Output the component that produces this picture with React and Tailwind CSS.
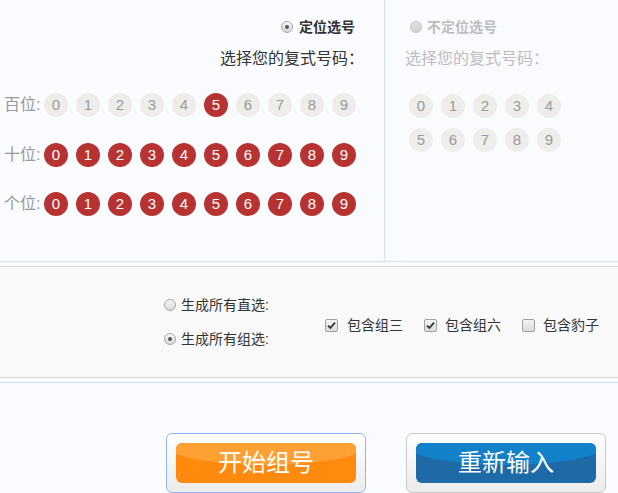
import React from 'react'

const font = { fontFamily: '"Liberation Sans", "Noto Sans CJK SC", sans-serif' }
const digits = [0, 1, 2, 3, 4, 5, 6, 7, 8, 9]

const Ball = ({ n, on }) => (
  <span
    className={
      'flex items-center justify-center w-[24px] h-[24px] rounded-full text-[15px] ' +
      (on ? 'bg-[#b73331] text-white' : 'bg-[#efedea] text-[#9a9a9a]')
    }
  >
    {n}
  </span>
)

const Radio = ({ checked, disabled }) => (
  <span
    className={
      'flex items-center justify-center w-[12px] h-[12px] rounded-full border ' +
      (disabled
        ? 'border-[#c4c4c4] bg-gradient-to-b from-[#e4e4e4] to-[#cfcfcf]'
        : 'border-[#a8a8a8] bg-gradient-to-b from-[#f6f6f6] to-[#d9d9d9]')
    }
  >
    {checked && <span className="w-[4px] h-[4px] rounded-full bg-[#555]" />}
  </span>
)

const Check = ({ checked }) => (
  <span className="flex items-center justify-center w-[13px] h-[13px] rounded-[2px] border border-[#a0a0a0] bg-gradient-to-b from-[#f4f4f4] to-[#dcdcdc]">
    {checked && (
      <svg width="9" height="9" viewBox="0 0 9 9">
        <path d="M1 4.6 L3.4 7 L8 1.6" fill="none" stroke="#333" strokeWidth="1.8" />
      </svg>
    )}
  </span>
)

const Row = ({ label, active }) => (
  <div className="flex items-center h-[24px] pl-[4px]">
    <span className="text-[16px] text-[#999] w-[40px]">{label}</span>
    <div className="flex gap-[8px]">
      {digits.map((d) => (
        <Ball key={d} n={d} on={active === 'all' || active === d} />
      ))}
    </div>
  </div>
)

const App = () => {
  return (
    <div style={font} className="w-[618px] h-[493px] overflow-hidden bg-[#fafbff] text-[#333]">
      <div className="flex h-[262px] border-b border-[#d0e2f6]">
        <div className="w-[385px] border-r border-[#d0e2f6] pt-[17px]">
          <div className="flex items-center justify-end gap-[6px] h-[20px] pr-[29px]">
            <Radio checked />
            <span className="text-[14px] font-bold">定位选号</span>
          </div>
          <div className="h-[24px] mt-[10px] pr-[20px] text-right text-[16px] leading-[24px]">
            选择您的复式号码：
          </div>
          <div className="mt-[22px]">
            <Row label="百位:" active={5} />
          </div>
          <div className="mt-[26px]">
            <Row label="十位:" active="all" />
          </div>
          <div className="mt-[25px]">
            <Row label="个位:" active="all" />
          </div>
        </div>
        <div className="flex-1 pt-[17px]">
          <div className="flex items-center gap-[5px] h-[20px] pl-[25px]">
            <Radio disabled />
            <span className="text-[14px] font-bold text-[#bdbdbd]">不定位选号</span>
          </div>
          <div className="h-[24px] mt-[10px] pl-[20px] text-[16px] leading-[24px] text-[#bdbdbd]">
            选择您的复式号码：
          </div>
          <div className="grid grid-cols-5 gap-x-[8px] gap-y-[10px] w-fit mt-[23px] pl-[24px]">
            {digits.map((d) => (
              <Ball key={d} n={d} />
            ))}
          </div>
        </div>
      </div>

      <div className="mt-[4px] h-[112px] border-y border-[#d9d9d9] bg-[#f9f9f9] flex items-center">
        <div className="flex flex-col gap-[20px] pl-[164px] text-[14px]">
          <div className="flex items-center gap-[5px] h-[14px]">
            <Radio />
            <span>生成所有直选:</span>
          </div>
          <div className="flex items-center gap-[5px] h-[14px]">
            <Radio checked />
            <span>生成所有组选:</span>
          </div>
        </div>
        <div className="flex items-center ml-[56px] mt-[6px] text-[14px]">
          <div className="flex items-center gap-[9px] w-[99px]">
            <Check checked />
            <span>包含组三</span>
          </div>
          <div className="flex items-center gap-[8px] w-[98px]">
            <Check checked />
            <span>包含组六</span>
          </div>
          <div className="flex items-center gap-[8px]">
            <Check />
            <span>包含豹子</span>
          </div>
        </div>
      </div>

      <div className="mt-[4px] border-t border-[#d0e2f6] flex pt-[50px] pl-[166px] gap-[40px]">
        <button className="relative w-[200px] h-[60px] rounded-[6px] border border-[#8fb6f2] bg-gradient-to-b from-white to-[#ececec] p-[9px]">
          <span className="relative flex items-center justify-center h-[40px] rounded-[6px] bg-[#ff8a0e] overflow-hidden">
            <span className="absolute left-[-20px] right-[-20px] top-[-30px] h-[52px] rounded-[50%] bg-[#ffa035]" />
            <span className="relative text-[24px] text-white leading-none">开始组号</span>
          </span>
        </button>
        <button className="relative w-[200px] h-[60px] rounded-[6px] border border-[#c8c8c8] bg-gradient-to-b from-white to-[#ececec] p-[9px]">
          <span className="relative flex items-center justify-center h-[40px] rounded-[6px] bg-[#1d6aa6] overflow-hidden">
            <span className="absolute left-[-20px] right-[-20px] top-[-30px] h-[52px] rounded-[50%] bg-[#1380ca]" />
            <span className="relative text-[24px] text-white leading-none">重新输入</span>
          </span>
        </button>
      </div>
    </div>
  )
}

export default App
